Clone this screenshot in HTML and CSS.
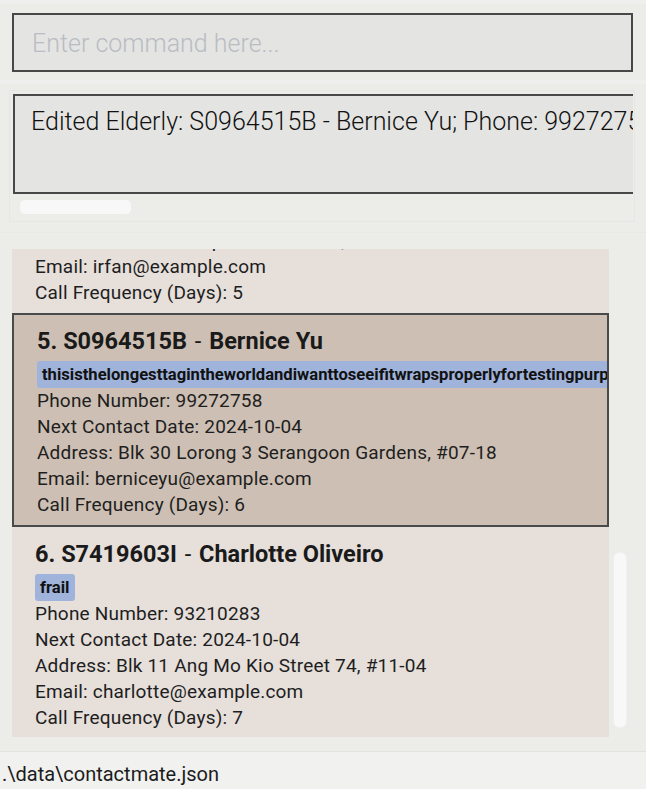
FILE: index.html
```html
<!DOCTYPE html>
<html>
<head>
<meta charset="utf-8">
<link rel="stylesheet" href="styles.css">
</head>
<body>
<div class="app">
  <div class="topstrip"></div>
  <div class="command-section">
    <div class="command-box"><span class="placeholder">Enter command here...</span></div>
  </div>
  <div class="sep"></div>
  <div class="result-section">
    <div class="result-panel">
      <div class="result-viewport">
        <div class="result-box">Edited Elderly: S0964515B - Bernice Yu; Phone: 99272758; Email: berniceyu@example.com</div>
      </div>
      <div class="hthumb"></div>
    </div>
  </div>
  <div class="list-section">
    <div class="list-viewport">
      <div class="list-inner">
        <div class="card">
          <div class="title">4. S8834628C <span class="dash">-</span> Irfan Ibrahim</div>
          <div class="tags"><span class="tag">frail</span></div>
          <div class="line">Phone Number: 92492021</div>
          <div class="line">Next Contact Date: 2024-10-04</div>
          <div class="line">Address: Blk 47 Tampines Street 20, #17-35</div>
          <div class="line">Email: irfan@example.com</div>
          <div class="line">Call Frequency (Days): 5</div>
        </div>
        <div class="card selected">
          <div class="title">5. S0964515B <span class="dash">-</span> Bernice Yu</div>
          <div class="tags"><span class="tag">thisisthelongesttagintheworldandiwanttoseeifitwrapsproperlyfortestingpurposes</span></div>
          <div class="line">Phone Number: 99272758</div>
          <div class="line">Next Contact Date: 2024-10-04</div>
          <div class="line">Address: Blk 30 Lorong 3 Serangoon Gardens, #07-18</div>
          <div class="line">Email: berniceyu@example.com</div>
          <div class="line">Call Frequency (Days): 6</div>
        </div>
        <div class="card">
          <div class="title">6. S7419603I <span class="dash">-</span> Charlotte Oliveiro</div>
          <div class="tags"><span class="tag">frail</span></div>
          <div class="line">Phone Number: 93210283</div>
          <div class="line">Next Contact Date: 2024-10-04</div>
          <div class="line">Address: Blk 11 Ang Mo Kio Street 74, #11-04</div>
          <div class="line">Email: charlotte@example.com</div>
          <div class="line">Call Frequency (Days): 7</div>
        </div>
      </div>
    </div>
    <div class="vscroll"><div class="vthumb"></div></div>
  </div>
  <div class="status-bar">.\data\contactmate.json</div>
</div>
</body>
</html>
```
FILE: styles.css
```css
* { box-sizing: border-box; }
html, body { margin: 0; padding: 0; }
body {
  background: #ecece9;
  font-family: Roboto, "Liberation Sans", sans-serif;
  color: #1c1c1c;
}
.app {
  width: 646px;
  height: 789px;
  display: flex;
  flex-direction: column;
  overflow: hidden;
}
.topstrip {
  height: 4px;
  background: #efefed;
  flex: none;
}
.command-section {
  flex: none;
  padding: 9px 13px 8px 12px;
}
.command-box {
  height: 59px;
  border: 2px solid #484848;
  background: #e4e4e2;
  padding: 0 0 0 18px;
  display: flex;
  align-items: center;
}
.placeholder {
  font-size: 25px;
  font-weight: 300;
  color: #b9bcc2;
  line-height: 30px;
  margin-top: 2px;
}
.sep {
  flex: none;
  height: 4px;
  background: #efefed;
}
.result-section {
  flex: none;
  padding: 6px 11px 0 9px;
  height: 138px;
}
.result-panel {
  height: 132px;
  border: 1px solid #e6e6e4;
  padding: 3px 1px 0 3px;
}
.result-viewport {
  overflow: hidden;
  height: 100px;
}
.result-box {
  width: 1400px;
  height: 100px;
  border: 2px solid #484848;
  border-right: none;
  background: #e4e4e2;
  padding: 10px 0 0 16px;
  font-size: 25px;
  font-weight: 300;
  line-height: 32px;
  color: #111;
  white-space: nowrap;
}
.hthumb {
  margin: 6px 0 0 7px;
  width: 111px;
  height: 14px;
  border-radius: 5px;
  background: #f8f8f8;
}
.list-section {
  flex: none;
  display: flex;
  padding: 16px 0 0 12px;
  height: 519px;
  margin-top: 10px;
  border-top: 1px solid #e8e8e6;
}
.list-viewport {
  width: 597px;
  height: 488px;
  overflow: hidden;
}
.list-inner {
  margin-top: -147px;
}
.card {
  background: #e6dfda;
  padding: 12px 0 7px 23px;
  overflow: hidden;
}
.card.selected {
  background: #cdbfb3;
  border: 2px solid #4a4a4a;
  padding: 11px 0 7px 23px;
}
.title {
  font-size: 23.5px;
  font-weight: 700;
  line-height: 30px;
  color: #1a1a1a;
  white-space: nowrap;
}
.dash {
  font-weight: 400;
  margin: 0 2px;
}
.tags {
  margin-top: 4.5px;
  height: 27.5px;
  white-space: nowrap;
}
.tag {
  display: inline-block;
  height: 27.5px;
  line-height: 27.5px;
  padding: 0 6px 0 5px;
  background: #a0b3db;
  border-radius: 3px;
  font-size: 16.6px;
  font-weight: 700;
  color: #111;
}
.line {
  font-size: 19px;
  letter-spacing: 0.2px;
  line-height: 26px;
  white-space: nowrap;
  color: #1e1e1e;
}
.vscroll {
  width: 14px;
  margin-left: 4px;
  height: 488px;
}
.vthumb {
  margin-top: 303px;
  height: 176px;
  width: 14px;
  border-radius: 6px;
  background: #f8f8f8;
  border: 1px solid #f0f0ee;
}
.status-bar {
  flex: none;
  height: 38px;
  border-top: 1px solid #e2e2e0;
  background: #f1f1ef;
  padding: 10px 0 0 2px;
  font-size: 20px;
  line-height: 24px;
  color: #1c1c1c;
}
```
